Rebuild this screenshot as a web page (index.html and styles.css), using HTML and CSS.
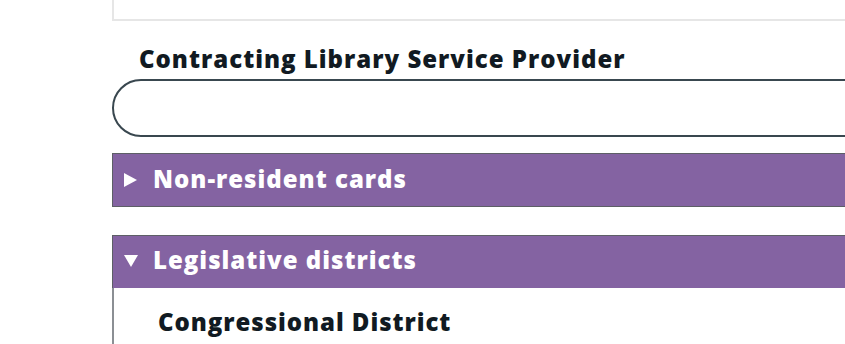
FILE: index.html
```html
<!DOCTYPE html>
<html lang="en">
<head>
  <meta charset="UTF-8" />
  <meta name="viewport" content="width=device-width, initial-scale=1.0" />
  <title>Library profile</title>
  <link rel="stylesheet" href="styles.css">
</head>
<body>
  <div class="page">
    <div class="prev-box"></div>

    <div class="field">
      <label class="field-label" for="provider">Contracting Library Service Provider</label>
      <input class="pill-input" id="provider" type="text" />
    </div>

    <details class="panel">
      <summary class="panel-head">Non-resident cards</summary>
    </details>

    <details class="panel" open>
      <summary class="panel-head">Legislative districts</summary>
      <div class="panel-body">
        <div class="sub-label">Congressional District</div>
        <div class="sub-input"></div>
      </div>
    </details>
  </div>
</body>
</html>
```

FILE: styles.css
```css
html, body {
  margin: 0;
  overflow: hidden;
  background: #fff;
}

body {
  font-family: 'Open Sans', 'Noto Sans', sans-serif;
  color: #111a22;
}

.page {
  width: 900px;
  padding-left: 112px;
}

.prev-box {
  height: 19px;
  border: 2px solid #e6e6e6;
  border-top: none;
  border-right: none;
}

.field {
  margin-top: 22px;
}

.field-label {
  display: block;
  margin-left: 27px;
  font-size: 24px;
  font-weight: 800;
  line-height: 32px;
  letter-spacing: 1px;
}

.pill-input {
  display: block;
  box-sizing: border-box;
  width: 100%;
  height: 58px;
  margin-top: 4px;
  border: 2px solid #39474f;
  border-radius: 29px;
  background: #fff;
}

.panel {
  margin-top: 16px;
}

.panel + .panel {
  margin-top: 28px;
}

.panel-head {
  list-style: none;
  display: flex;
  align-items: center;
  box-sizing: border-box;
  height: 54px;
  padding: 0 0 3px 11px;
  background: #8463a2;
  border: 1px solid #5d5f66;
  color: #fff;
  font-size: 24px;
  font-weight: 800;
  letter-spacing: 1px;
  cursor: pointer;
}

.panel-head::-webkit-details-marker {
  display: none;
}

/* closed: right-pointing triangle */
.panel-head::before {
  content: "";
  width: 0;
  height: 0;
  margin-right: 16px;
  margin-top: 2px;
  border-left: 13px solid #fff;
  border-top: 7px solid transparent;
  border-bottom: 7px solid transparent;
}

.panel[open] .panel-head {
  height: 53px;
  padding-bottom: 5px;
  border-bottom: none;
}

/* open: down-pointing triangle */
.panel[open] .panel-head::before {
  margin-right: 15px;
  border-left: 7px solid transparent;
  border-right: 7px solid transparent;
  border-top: 12px solid #fff;
  border-bottom: none;
}

.panel-body {
  border-left: 2px solid #8b8f94;
  padding: 18px 0 0 44px;
}

.sub-label {
  font-size: 24px;
  font-weight: 800;
  line-height: 32px;
  letter-spacing: 0.95px;
}

.sub-input {
  height: 40px;
  margin-top: 6px;
  margin-left: 16px;
  width: 130px;
  border-top: 1px solid #eee;
}
```
